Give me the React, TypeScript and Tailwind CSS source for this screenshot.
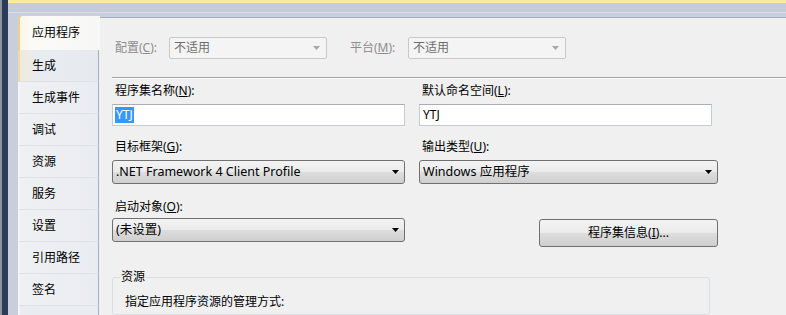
import React from "react";

const FONT = "font-['Segoe_UI','Noto_Sans','Noto_Sans_CJK_SC',sans-serif]";

function Arrow({ disabled }: { disabled?: boolean }) {
  return (
    <svg width="7" height="4" viewBox="0 0 7 4" className="shrink-0">
      <path d="M0 0 H7 L3.5 4 Z" fill={disabled ? "#a8a8a8" : "#000"} />
    </svg>
  );
}

function DisabledCombo({ text }: { text: string }) {
  return (
    <div className="w-[158px] h-[22px] border border-[#c9c9c9] rounded-[2px] bg-[#f4f4f4] flex items-center pl-[4px] pr-[6px] text-[#6d6d6d]">
      <span className="flex-1">{text}</span>
      <Arrow disabled />
    </div>
  );
}

function Combo({ text, w }: { text: string; w: string }) {
  return (
    <div
      className={`${w} h-[24px] border border-[#707070] rounded-[3px] flex items-center pl-[3px] pr-[5px] text-black bg-[linear-gradient(#f3f3f3,#ebebeb_48%,#dddddd_52%,#cfcfcf)]`}
    >
      <span className="flex-1 text-[12.5px]">{text}</span>
      <Arrow />
    </div>
  );
}

function TextInput({ children }: { children: React.ReactNode }) {
  return (
    <div className="w-[293px] h-[22px] border border-[#c5ccd6] border-t-[#abadb3] bg-white flex items-center pl-[2px]">
      {children}
    </div>
  );
}

function Label({ children }: { children: React.ReactNode }) {
  return <div className="h-[16px] leading-[16px] pl-[3px] text-black">{children}</div>;
}

const tabs = ["生成", "生成事件", "调试", "资源", "服务", "设置", "引用路径", "签名"];

export default function App() {
  return (
    <div className={`w-[786px] h-[315px] overflow-hidden flex bg-[#c8cedb] text-[12px] ${FONT}`}>
      {/* left dark frame strip */}
      <div className="w-[8px] h-full flex shrink-0">
        <div className="w-[2px] bg-[#8e939c]" />
        <div className="w-[6px] bg-[#2c3d5b]" />
      </div>
      <div className="flex-1 flex flex-col">
        <div className="h-[3px] bg-[#fce7a5]" />
        <div className="h-[10px] bg-[#c5cbd9] border-b border-[#d9dde6]" />
        <div className="flex-1 flex pl-[10px] bg-[#c8cedb]">
          {/* tab column */}
          <div className="w-[81px] flex flex-col pt-[2px] shrink-0">
            <div className="h-[35px] rounded-tl-[5px] border-l-[2px] border-t border-l-[#efcf8e] border-t-[#d9d2bd] bg-[linear-gradient(90deg,#fbf6e8,#fbfaf6_15%,#f7f7f7)] flex items-center pl-[12px] text-black relative z-10 -mr-px">
              应用程序
            </div>
            {tabs.map((t, i) => (
              <div
                key={t}
                className={`h-[32px] flex items-center pl-[12px] text-black border-r border-[#a6aebd] border-b border-b-[#dde1e8] ${
                  i === 0
                    ? "border-l-[2px] border-l-[#efd9a8] bg-[linear-gradient(90deg,#f1ead8,#e8ebf0_20%,#e6e9ee)]"
                    : "border-l-[2px] border-l-[#f4f5f8] bg-[linear-gradient(90deg,#eef0f4,#e9ecf0)]"
                }`}
              >
                {t}
              </div>
            ))}
            <div className="flex-1 border-r border-[#a6aebd] bg-[#e9ecf0] border-l-[2px] border-l-[#f4f5f8]" />
          </div>
          {/* content panel */}
          <div className="flex-1 mt-[4px] border-t border-[#a6aebd] bg-[#f0f0f0] flex flex-col pl-[13px] pt-[19px]">
            <div className="flex items-center h-[22px] text-[#8d8d8d]">
              <div className="w-[57px] pl-[3px]">
                配置(<u>C</u>):
              </div>
              <DisabledCombo text="不适用" />
              <div className="w-[23px]" />
              <div className="w-[58px]">
                平台(<u>M</u>):
              </div>
              <DisabledCombo text="不适用" />
            </div>
            <div className="mt-[18px] h-[2px] border-t border-[#a0a0a0] border-b border-b-white" />
            <div className="flex mt-[4px]">
              <div className="w-[307px] flex flex-col">
                <Label>
                  程序集名称(<u>N</u>):
                </Label>
                <div className="h-[5px]" />
                <TextInput>
                  <span className="bg-[#3399ff] text-white leading-[16px] px-[1px]">YTJ</span>
                </TextInput>
                <div className="h-[13px]" />
                <Label>
                  目标框架(<u>G</u>):
                </Label>
                <div className="h-[5px]" />
                <Combo w="w-[293px]" text=".NET Framework 4 Client Profile" />
                <div className="h-[15px]" />
                <Label>
                  启动对象(<u>O</u>):
                </Label>
                <div className="h-[3px]" />
                <Combo w="w-[293px]" text="(未设置)" />
              </div>
              <div className="flex flex-col">
                <Label>
                  默认命名空间(<u>L</u>):
                </Label>
                <div className="h-[5px]" />
                <TextInput>
                  <span className="leading-[16px] px-[1px]">YTJ</span>
                </TextInput>
                <div className="h-[13px]" />
                <Label>
                  输出类型(<u>U</u>):
                </Label>
                <div className="h-[5px]" />
                <Combo w="w-[299px]" text="Windows 应用程序" />
                <div className="h-[35px]" />
                <div className="ml-[120px] w-[179px] h-[28px] border border-[#707070] rounded-[3px] flex items-center justify-center bg-[linear-gradient(#f3f3f3,#ebebeb_48%,#dddddd_52%,#cfcfcf)]">
                  程序集信息(<u>I</u>)...
                </div>
              </div>
            </div>
            <div className="mt-[30px] w-[598px] flex-1 border border-[#d5dfe5] rounded-[3px] relative flex flex-col">
              <div className="absolute -top-[9px] left-[7px] px-[1px] bg-[#f0f0f0] leading-[16px]">资源</div>
              <div className="mt-[16px] pl-[12px] leading-[16px]">指定应用程序资源的管理方式:</div>
            </div>
          </div>
        </div>
      </div>
    </div>
  );
}
